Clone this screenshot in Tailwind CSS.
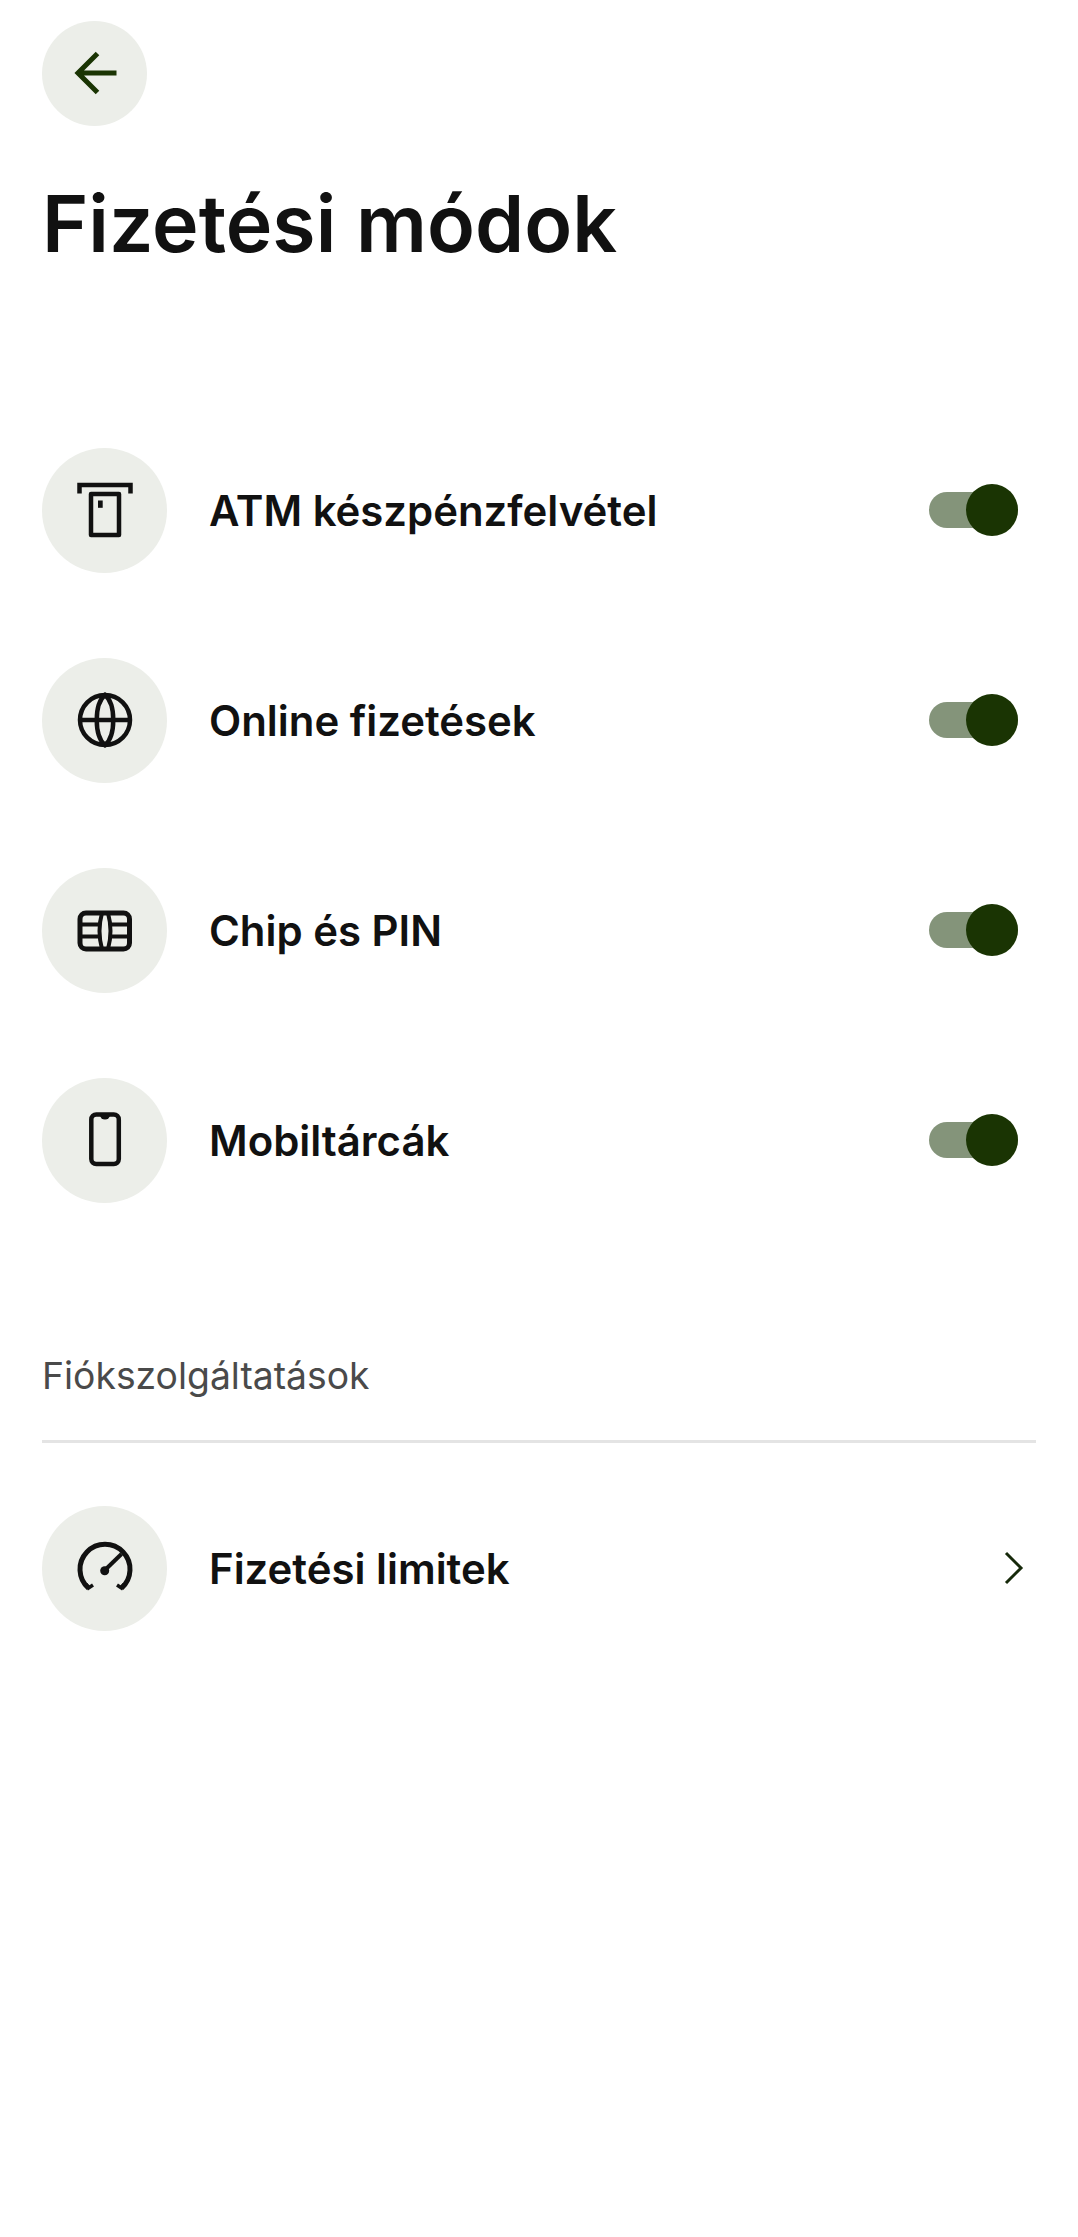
<!DOCTYPE html>
<html lang="hu">

<head>
    <meta charset="UTF-8" />
    <title>Fizetési módok</title>
    <script src="https://cdn.jsdelivr.net/npm/@tailwindcss/browser@4"></script>
</head>

<body class="bg-white min-h-screen font-['Inter',sans-serif] text-[#111111]">
    <div class="px-[42px] pt-[20.5px]">
        <!-- Header -->
        <button class="w-[105px] h-[105px] rounded-full bg-[#eceee9] flex items-center justify-center">
            <svg width="60" height="60" viewBox="0 0 60 60" fill="none" stroke="#1a3403" stroke-width="5">
                <path d="M51.5 30H13M32.5 10.5L13 30L32.5 49.5" />
            </svg>
        </button>
        <h1 class="mt-[52px] text-[78.8px] leading-[92px] font-semibold">Fizetési módok</h1>

        <!-- Payment methods -->
        <div class="mt-[178px] flex flex-col gap-[85px]">
            <div class="flex items-center h-[125px]">
                <div class="w-[125px] h-[125px] rounded-full bg-[#eceee9] flex items-center justify-center shrink-0">
                    <svg width="60" height="60" viewBox="0 0 60 60" fill="none" stroke="#111111" stroke-width="4.5">
                        <path d="M4.5 13.5V5H55.5V13.5" />
                        <rect x="16" y="14" width="28" height="41" stroke-linejoin="round" />
                        <rect x="23" y="20.5" width="4.7" height="7.3" fill="#111111" stroke="none" />
                    </svg>
                </div>
                <span class="ml-[42px] pt-[3px] text-[41.9px] font-[560]">ATM készpénzfelvétel</span>
                <div class="relative ml-auto mr-[18px] w-[89px] h-[36px] rounded-full bg-[#84947a]">
                    <div class="absolute right-0 top-[-8px] w-[52px] h-[52px] rounded-full bg-[#1a3403]"></div>
                </div>
            </div>

            <div class="flex items-center h-[125px]">
                <div class="w-[125px] h-[125px] rounded-full bg-[#eceee9] flex items-center justify-center shrink-0">
                    <svg width="60" height="60" viewBox="0 0 60 60" fill="none" stroke="#111111" stroke-width="4.5">
                        <circle cx="30" cy="30" r="25" />
                        <path d="M5 30H55M30 5C19 14 19 46 30 55C41 46 41 14 30 5Z" />
                    </svg>
                </div>
                <span class="ml-[42px] pt-[3px] text-[41.9px] font-[560]">Online fizetések</span>
                <div class="relative ml-auto mr-[18px] w-[89px] h-[36px] rounded-full bg-[#84947a]">
                    <div class="absolute right-0 top-[-8px] w-[52px] h-[52px] rounded-full bg-[#1a3403]"></div>
                </div>
            </div>

            <div class="flex items-center h-[125px]">
                <div class="w-[125px] h-[125px] rounded-full bg-[#eceee9] flex items-center justify-center shrink-0">
                    <svg width="60" height="60" viewBox="0 0 60 60" fill="none" stroke="#111111" stroke-width="5">
                        <rect x="5" y="13" width="49.5" height="36" rx="6" />
                        <path d="M27 13Q22 31 27 49M33 13Q38 31 33 49M5 24.5H24M5 36.5H24M36 24.5H55M36 36.5H55" stroke-width="4" />
                    </svg>
                </div>
                <span class="ml-[42px] pt-[3px] text-[41.9px] font-[560]">Chip és PIN</span>
                <div class="relative ml-auto mr-[18px] w-[89px] h-[36px] rounded-full bg-[#84947a]">
                    <div class="absolute right-0 top-[-8px] w-[52px] h-[52px] rounded-full bg-[#1a3403]"></div>
                </div>
            </div>

            <div class="flex items-center h-[125px]">
                <div class="w-[125px] h-[125px] rounded-full bg-[#eceee9] flex items-center justify-center shrink-0">
                    <svg width="60" height="60" viewBox="0 0 60 60" fill="none" stroke="#111111" stroke-width="4.5">
                        <rect x="16.3" y="4.5" width="27.5" height="49.5" rx="5" />
                        <path d="M25 5H35A5 4.5 0 0 1 25 5Z" fill="#111111" stroke="none" />
                    </svg>
                </div>
                <span class="ml-[42px] pt-[3px] text-[41.9px] font-[560]">Mobiltárcák</span>
                <div class="relative ml-auto mr-[18px] w-[89px] h-[36px] rounded-full bg-[#84947a]">
                    <div class="absolute right-0 top-[-8px] w-[52px] h-[52px] rounded-full bg-[#1a3403]"></div>
                </div>
            </div>
        </div>

        <!-- Account services -->
        <div class="mt-[151px] text-[37.3px] leading-[44px] text-[#4a4a4a]">Fiókszolgáltatások</div>
        <div class="mt-[42px] h-[3px] bg-[#e4e4e4]"></div>

        <div class="mt-[63px] flex items-center h-[125px]">
            <div class="w-[125px] h-[125px] rounded-full bg-[#eceee9] flex items-center justify-center shrink-0">
                <svg width="60" height="60" viewBox="0 0 60 60" fill="none" stroke="#111111" stroke-width="4">
                    <path d="M13.5 50A25 25 0 1 1 46.5 50" stroke-width="5" />
                    <path d="M11 46L13.5 50L18 47M49 46L46.5 50L42 47" stroke-width="3.5" />
                    <path d="M30 32L46.5 16" stroke-width="4" />
                    <circle cx="29.7" cy="32.7" r="4.5" fill="#111111" stroke="none" />
                </svg>
            </div>
            <span class="ml-[42px] pt-[3px] text-[41.9px] font-[560]">Fizetési limitek</span>
            <svg class="ml-auto mr-[12px]" width="20" height="34" viewBox="0 0 20 34" fill="none" stroke="#16290a" stroke-width="3">
                <path d="M2 2L17 17L2 32" />
            </svg>
        </div>
    </div>
</body>

</html>
